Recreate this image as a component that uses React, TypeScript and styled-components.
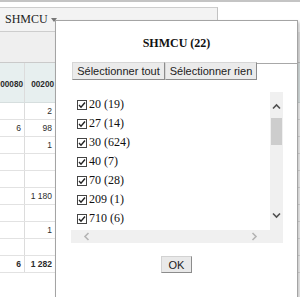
import React from "react";
import styled, { createGlobalStyle } from "styled-components";

const GlobalStyle = createGlobalStyle`
  html, body {
    margin: 0;
    padding: 0;
    background: #fff;
  }
  body {
    font-family: "Liberation Sans", Arial, sans-serif;
    overflow: hidden;
  }
  * {
    box-sizing: border-box;
  }
`;

const Page = styled.div`
  position: relative;
  width: 300px;
  height: 297px;
  overflow: hidden;
  background: #fff;
`;

const TopEdge = styled.div`
  height: 2px;
  background: #c4c4c4;
  margin-bottom: 5px;
`;

const TabStrip = styled.div`
  width: 218px;
  height: 25px;
  display: flex;
  align-items: center;
  background: #f3f3f3;
  border-top: 1px solid #cdcdcd;
  border-right: 1px solid #c2c2c2;
  border-bottom: 1px solid #cdcdcd;
`;

const ColumnTab = styled.div`
  display: flex;
  align-items: center;
  gap: 3px;
  padding-left: 5px;
  font-family: "Liberation Serif", "Times New Roman", serif;
  font-size: 12px;
  color: #222;
`;

const Toolbar = styled.div`
  height: 31px;
  background: #efefef;
  border-bottom: 1px solid #cacaca;
`;

const Row = styled.div<{ $head?: boolean }>`
  display: flex;
  height: ${(p) => (p.$head ? "40px" : "17px")};
  background: ${(p) => (p.$head ? "#e7efef" : "#fff")};
  border-bottom: 1px solid ${(p) => (p.$head ? "#d6dede" : "#e2e2e2")};
`;

const Cell = styled.div<{ $w: number; $head?: boolean; $bold?: boolean }>`
  width: ${(p) => p.$w}px;
  flex: none;
  overflow: hidden;
  white-space: nowrap;
  display: flex;
  justify-content: flex-end;
  align-items: ${(p) => (p.$head ? "flex-start" : "center")};
  padding: ${(p) => (p.$head ? "16px 1px 0 0" : "0 3px 0 0")};
  border-right: 1px solid #dcdcdc;
  font-size: ${(p) => (p.$head ? "8.2px" : "8.5px")};
  line-height: 12px;
  font-weight: ${(p) => (p.$head || p.$bold ? "bold" : "normal")};
  color: ${(p) => (p.$head ? "#2a2a2a" : "#2c2c2c")};
`;

const Filler = styled.div`
  flex: 1;
`;

const Panel = styled.div`
  position: absolute;
  left: 55px;
  top: 20px;
  width: 243px;
  height: 290px;
  background: #fff;
  border: 1px solid #a4a4a4;
  box-shadow: 2px 2px 3px rgba(0, 0, 0, 0.22);
  display: flex;
  flex-direction: column;
`;

const Title = styled.div`
  padding-top: 15px;
  line-height: 14px;
  text-align: center;
  font-family: "Liberation Serif", "Times New Roman", serif;
  font-weight: bold;
  font-size: 12px;
  color: #111;
`;

const ButtonRow = styled.div`
  display: flex;
  margin: 12px 0 0 16px;
  height: 18px;
`;

const TabButton = styled.button<{ $w: number }>`
  width: ${(p) => p.$w}px;
  height: 18px;
  padding: 0;
  background: #ebebeb;
  border: 1px solid;
  border-color: #d6d6d6 #8c8c8c #8c8c8c #d6d6d6;
  font-family: "Liberation Sans", Arial, sans-serif;
  font-size: 11px;
  color: #222;
`;

const SearchStub = styled.div`
  flex: 1;
  margin-top: 1px;
  border-top: 1px solid #a8a8a8;
`;

const ListBox = styled.div`
  margin: 12px 0 0 15px;
  width: 212px;
  height: 151px;
  display: grid;
  grid-template-columns: 1fr 13px;
  grid-template-rows: 1fr 13px;
`;

const Items = styled.div`
  padding: 3px 0 0 6px;
  overflow: hidden;
`;

const Item = styled.label`
  display: flex;
  align-items: center;
  height: 19px;
  gap: 2px;
  font-family: "Liberation Serif", "Times New Roman", serif;
  font-size: 12px;
  color: #111;
`;

const Box = styled.span`
  width: 10px;
  height: 10px;
  border: 1px solid #444;
  background: #fff;
  display: flex;
  align-items: center;
  justify-content: center;
`;

const VScroll = styled.div`
  background: #f0f0f0;
  display: flex;
  flex-direction: column;
  align-items: center;
`;

const ArrowButton = styled.div<{ $size: number; $pt?: number; $pb?: number }>`
  flex: none;
  width: 100%;
  height: ${(p) => p.$size}px;
  display: flex;
  align-items: center;
  justify-content: center;
  padding-top: ${(p) => p.$pt || 0}px;
  padding-bottom: ${(p) => p.$pb || 0}px;
`;

const Thumb = styled.div`
  width: 11px;
  height: 27px;
  background: #cdcdcd;
`;

const Spacer = styled.div`
  flex: 1;
`;

const HScroll = styled.div`
  background: #f0f0f0;
  display: flex;
  justify-content: space-between;
`;

const HArrow = styled.div`
  width: 32px;
  display: flex;
  align-items: center;
  justify-content: center;
`;

const Corner = styled.div`
  background: #f0f0f0;
`;

const OkButton = styled.button`
  align-self: center;
  margin-top: 13px;
  width: 31px;
  height: 17px;
  padding: 0;
  background: #e9e9e9;
  border: 1px solid;
  border-color: #d2d2d2 #8c8c8c #8c8c8c #d2d2d2;
  font-family: "Liberation Sans", Arial, sans-serif;
  font-size: 11px;
  color: #222;
`;

const Chevron = ({ dir, color }: { dir: "up" | "down" | "left" | "right"; color: string }) => {
  const paths = {
    up: "M1 5.5 L4.5 2 L8 5.5",
    down: "M1 2.5 L4.5 6 L8 2.5",
    left: "M5.5 1 L2 4.5 L5.5 8",
    right: "M2.5 1 L6 4.5 L2.5 8",
  };
  return (
    <svg width="9" height="9" viewBox="0 0 9 9">
      <path d={paths[dir]} fill="none" stroke={color} strokeWidth="1.6" />
    </svg>
  );
};

const rows: [string, string, boolean?][] = [
  ["", "2"],
  ["6", "98"],
  ["", "1"],
  ["", ""],
  ["", ""],
  ["", "1 180"],
  ["", ""],
  ["", "1"],
  ["", ""],
  ["6", "1 282", true],
];

const values = ["20 (19)", "27 (14)", "30 (624)", "40 (7)", "70 (28)", "209 (1)", "710 (6)"];

export default function App() {
  return (
    <Page>
      <GlobalStyle />
      <TopEdge />
      <TabStrip>
        <ColumnTab>
          SHMCU
          <svg width="6" height="4" viewBox="0 0 6 4">
            <path d="M0 0 H6 L3 4 Z" fill="#777" />
          </svg>
        </ColumnTab>
      </TabStrip>
      <Toolbar />
      <Row $head>
        <Cell $w={25} $head>
          00080
        </Cell>
        <Cell $w={31} $head>
          00200
        </Cell>
        <Filler />
      </Row>
      {rows.map(([a, b, bold], i) => (
        <Row key={i}>
          <Cell $w={25} $bold={bold}>
            {a}
          </Cell>
          <Cell $w={31} $bold={bold}>
            {b}
          </Cell>
          <Filler />
        </Row>
      ))}

      <Panel>
        <Title>SHMCU (22)</Title>
        <ButtonRow>
          <TabButton $w={93}>Sélectionner tout</TabButton>
          <TabButton $w={92}>Sélectionner rien</TabButton>
          <SearchStub />
        </ButtonRow>
        <ListBox>
          <Items>
            {values.map((v) => (
              <Item key={v}>
                <Box>
                  <svg width="8" height="8" viewBox="0 0 8 8">
                    <path d="M1 4 L3 6.2 L7 1.5" fill="none" stroke="#222" strokeWidth="1.4" />
                  </svg>
                </Box>
                {v}
              </Item>
            ))}
          </Items>
          <VScroll>
            <ArrowButton $size={26} $pt={5}>
              <Chevron dir="up" color="#505050" />
            </ArrowButton>
            <Thumb />
            <Spacer />
            <ArrowButton $size={26} $pb={4}>
              <Chevron dir="down" color="#505050" />
            </ArrowButton>
          </VScroll>
          <HScroll>
            <HArrow>
              <Chevron dir="left" color="#b4b4b4" />
            </HArrow>
            <HArrow>
              <Chevron dir="right" color="#b4b4b4" />
            </HArrow>
          </HScroll>
          <Corner />
        </ListBox>
        <OkButton>OK</OkButton>
      </Panel>
    </Page>
  );
}
